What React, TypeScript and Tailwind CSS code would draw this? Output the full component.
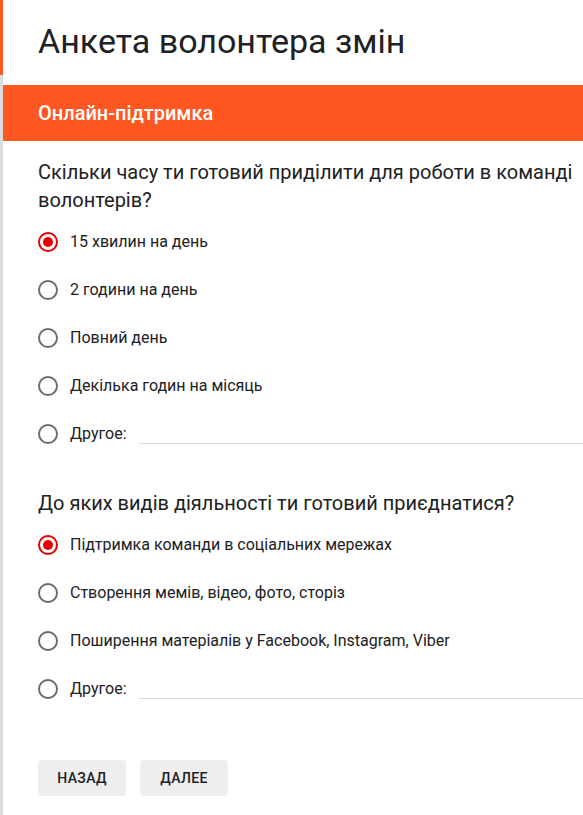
import { useState } from 'react';

interface RadioQuestionProps {
    title: string;
    options: string[];
    withOther?: boolean;
    selected: number;
    onSelect: (index: number) => void;
}

function Radio({ checked }: { checked: boolean }) {
    return (
        <span
            className={`flex h-5 w-5 shrink-0 items-center justify-center rounded-full border-2 ${checked ? 'border-[#e50000]' : 'border-[#6b6b6b]'}`}
        >
            {checked && <span className="h-[10px] w-[10px] rounded-full bg-[#e50000]" />}
        </span>
    );
}

function RadioQuestion({ title, options, withOther, selected, onSelect }: RadioQuestionProps) {
    return (
        <div>
            <h2 className="pr-2 text-[20px] leading-[28px] text-[#202124]">{title}</h2>
            <div className="mt-[4px]">
                {options.map((opt, i) => (
                    <label key={opt} className="flex h-12 cursor-pointer items-center gap-3" onClick={() => onSelect(i)}>
                        <Radio checked={selected === i} />
                        <span className="text-[16px] text-[#202124]">{opt}</span>
                    </label>
                ))}
                {withOther && (
                    <div className="flex h-12 items-center gap-3" onClick={() => onSelect(options.length)}>
                        <Radio checked={selected === options.length} />
                        <span className="text-[16px] text-[#202124]">Другое:</span>
                        {/* text field for the free answer */}
                        <input
                            type="text"
                            className="mt-[19px] h-[1px] flex-1 border-b border-[#dadce0] bg-transparent outline-none"
                        />
                    </div>
                )}
            </div>
        </div>
    );
}

export default function App() {
    const [answer1, setAnswer1] = useState(0);
    const [answer2, setAnswer2] = useState(0);

    return (
        <div className="flex min-h-[815px] w-full bg-white font-['Roboto',sans-serif]">
            {/* left edge of the card */}
            <div className="flex w-[3px] shrink-0 flex-col">
                <div className="h-[75px] bg-[#ff5722]" />
                <div className="flex-1 bg-[#dcdcdc]" />
            </div>

            <div className="flex min-w-0 flex-1 flex-col">
                <div className="flex h-[85px] items-center pl-[35px] pb-[4px]">
                    <h1 className="text-[34px] leading-[40px] text-[#202124]">Анкета волонтера змін</h1>
                </div>

                <div className="flex h-[56px] items-center bg-[#ff5722] pl-[35px]">
                    <span className="text-[20px] font-medium text-white">Онлайн-підтримка</span>
                </div>

                <div className="flex flex-col pl-[35px] pt-[17px]">
                    <RadioQuestion
                        title="Скільки часу ти готовий приділити для роботи в команді волонтерів?"
                        options={['15 хвилин на день', '2 години на день', 'Повний день', 'Декілька годин на місяць']}
                        withOther
                        selected={answer1}
                        onSelect={setAnswer1}
                    />

                    <div className="mt-[31px]">
                        <RadioQuestion
                            title="До яких видів діяльності ти готовий приєднатися?"
                            options={[
                                'Підтримка команди в соціальних мережах',
                                'Створення мемів, відео, фото, сторіз',
                                'Поширення матеріалів у Facebook, Instagram, Viber',
                            ]}
                            withOther
                            selected={answer2}
                            onSelect={setAnswer2}
                        />
                    </div>

                    <div className="mt-[47px] flex gap-[14px]">
                        <button className="h-9 w-[88px] rounded bg-[#eeeeee] text-[14px] font-medium tracking-wide text-[#202124]">
                            НАЗАД
                        </button>
                        <button className="h-9 w-[88px] rounded bg-[#eeeeee] text-[14px] font-medium tracking-wide text-[#202124]">
                            ДАЛЕЕ
                        </button>
                    </div>
                </div>
            </div>
        </div>
    );
}
